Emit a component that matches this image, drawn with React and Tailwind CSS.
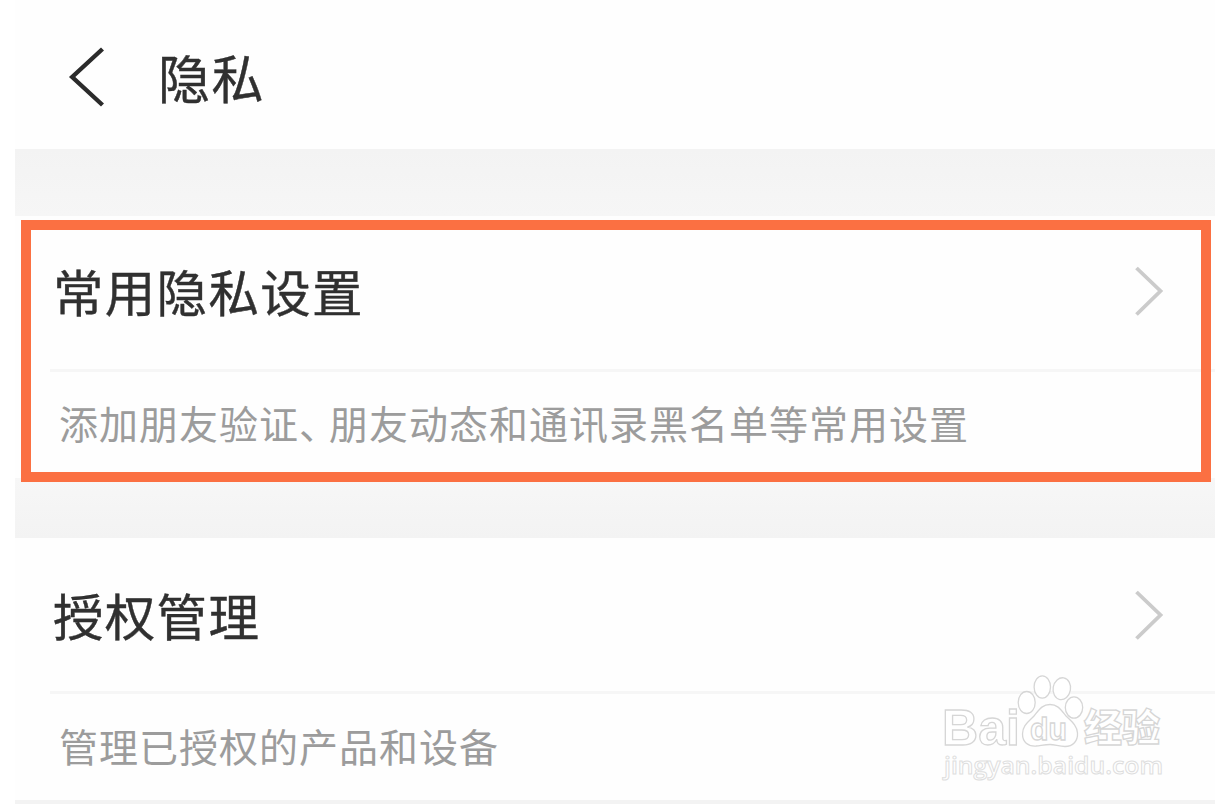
import React from 'react';

const sections = [
  {
    id: 'common',
    title: '常用隐私设置',
    description: (
      <>
        添加朋友验证<span className="tracking-[-9px]">、</span>朋友动态和通讯录黑名单等常用设置
      </>
    ),
    titlePadding: 'pb-1',
    descriptionPadding: 'pb-[6px]',
  },
  {
    id: 'auth',
    title: '授权管理',
    description: '管理已授权的产品和设备',
    titlePadding: 'pb-0',
    descriptionPadding: 'pb-[4px]',
  },
];

const BackIcon = () => (
  <svg width="36" height="60" viewBox="0 0 36 60" fill="none" stroke="#2b2b2b" strokeWidth="4.4">
    <path d="M34.5 2 L4.2 30 L34.5 58" />
  </svg>
);

const ArrowIcon = () => (
  <svg width="30" height="52" viewBox="0 0 30 52" fill="none" stroke="#cbcbcb" strokeWidth="3.8">
    <path d="M2.5 3 L26.5 26 L2.5 49.500" />
  </svg>
);

const Watermark = () => (
  <svg
    className="absolute left-[935px] top-[670px]"
    width="240"
    height="120"
    viewBox="0 0 240 120"
    fill="#ffffff"
    stroke="#d6d6d6"
    strokeWidth="1.3"
  >
    <text x="7" y="74.500" fontFamily="Liberation Sans, Arial, sans-serif" fontWeight="700" fontSize="50" textLength="78" lengthAdjust="spacingAndGlyphs">
      Bai
    </text>

    {/* Paw */}
    <ellipse cx="91.700" cy="32.500" rx="8.500" ry="11" />
    <ellipse cx="107.300" cy="17" rx="8.200" ry="11.200" />
    <ellipse cx="126.800" cy="18.700" rx="8.700" ry="11" transform="rotate(10 126.800 18.700)" />
    <ellipse cx="139" cy="37.500" rx="8.700" ry="10.600" />
    <path d="M115 34.500 C107 34.500 104 40 99 46 C94 51.500 87.500 55 87.500 64 C87.500 72 93 76.500 101 76 C106 75.500 110 74.500 115 74.500 C120 74.500 124 76.500 130 76.500 C138 76.500 143 71 142.500 63 C142 55 136 51 131 46 C126 40 123 34.500 115 34.500 Z" />
    <text x="95" y="69.500" fontFamily="Liberation Sans, Arial, sans-serif" fontWeight="700" fontSize="32" textLength="37" lengthAdjust="spacingAndGlyphs">
      du
    </text>

    <text x="149" y="71" fontFamily="Noto Sans CJK SC, sans-serif" fontWeight="900" fontSize="37.500" textLength="76" lengthAdjust="spacingAndGlyphs">
      经验
    </text>
    <text x="9" y="103.500" fontFamily="Open Sans, sans-serif" fontWeight="600" fontSize="24" stroke="#dedede" strokeWidth="1" textLength="219" lengthAdjust="spacingAndGlyphs">
      jingyan.baidu.com
    </text>
  </svg>
);

const SettingsSection = ({ title, description, titlePadding, descriptionPadding }) => (
  <section className="h-[262px] shrink-0 bg-[#fefefe]">
    <div className={`flex h-[153px] items-center justify-between pl-[38px] pr-[51px] ${titlePadding}`}>
      <h2 className="text-[50.5px] leading-none tracking-[1.3px] [-webkit-text-stroke:0.4px_#303030]">{title}</h2>
      <ArrowIcon />
    </div>
    <div className="ml-[35px] h-[3px] bg-[#f6f6f6]"></div>
    <p className={`flex h-[106px] items-center whitespace-nowrap pl-11 text-[39px] leading-none tracking-[1px] text-[#9c9c9c] ${descriptionPadding}`}>
      <span>{description}</span>
    </p>
  </section>
);

const App = () => {
  return (
    <div className="relative h-[807px] w-[1229px] overflow-hidden bg-white font-['Noto_Sans_CJK_SC',sans-serif] text-[#303030]">
      <main className="ml-[15px] flex h-[804px] w-[1200px] flex-col overflow-hidden bg-[#f3f3f3]">
        <header className="flex h-[149px] shrink-0 items-center gap-[54px] bg-[#fefefe] pl-[53px] pt-1">
          <BackIcon />
          <h1 className="pt-px text-[52px] leading-none tracking-[1.5px] [-webkit-text-stroke:0.4px_#303030]">隐私</h1>
        </header>
        <div className="h-[67px] shrink-0 bg-linear-to-b from-[#f3f3f3] to-[#f6f6f6]"></div>

        <SettingsSection {...sections[0]} />
        <div className="h-[60px] shrink-0 bg-linear-to-b from-[#f7f7f7] to-[#f3f3f3]"></div>
        <SettingsSection {...sections[1]} />
      </main>

      {/* Highlight around the first section */}
      <div className="absolute left-[21px] top-[220px] h-[262px] w-[1190px] border-10 border-[#fb7042]"></div>

      <Watermark />
    </div>
  );
};

export default App;
